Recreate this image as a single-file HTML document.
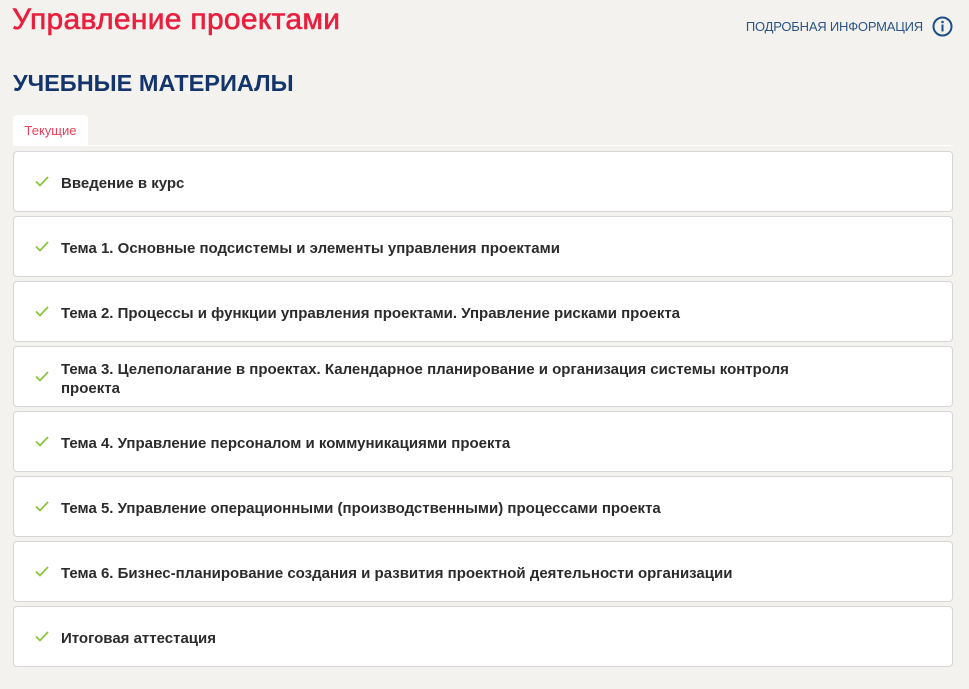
<!DOCTYPE html>
<html><head><meta charset="utf-8"><style>
body{margin:0;background:#f3f2ef;font-family:"Liberation Sans",sans-serif;width:969px;height:689px;overflow:hidden;position:relative}
h1{position:absolute;left:12px;top:3px;margin:0;font-size:30px;font-weight:normal;color:#e8203f;letter-spacing:0.3px;-webkit-text-stroke:0.6px #e8203f}
.info{position:absolute;right:16px;top:16px;font-size:13px;color:#2a5585;display:flex;align-items:center}
.info span{margin-right:9px;letter-spacing:-0.2px}
h2{position:absolute;left:13px;top:70px;margin:0;font-size:23.5px;font-weight:bold;color:#14356b;letter-spacing:0}
.tab{position:absolute;left:13px;top:115px;width:75px;height:31px;background:#fff;border-radius:4px 4px 0 0;color:#e8405a;font-size:13px;line-height:31px;text-align:center}
.line{position:absolute;left:13px;top:145px;width:940px;height:1px;background:#fff}
.card{position:absolute;left:13px;width:938px;height:59px;background:#fff;border:1px solid #d6d6d6;border-radius:4px}
.card svg{position:absolute;left:21px;top:24px}
.card div{position:absolute;left:47px;top:4px;bottom:0;width:760px;display:flex;align-items:center;font-size:15px;font-weight:bold;color:#2b2b2b;line-height:19px;letter-spacing:0}
</style></head><body>
<h1>Управление проектами</h1>
<div class="info"><span>ПОДРОБНАЯ ИНФОРМАЦИЯ</span><svg width="21" height="21" viewBox="0 0 21 21"><circle cx="10.5" cy="10.5" r="9" fill="none" stroke="#1b4f87" stroke-width="2"/><rect x="9.5" y="8.5" width="2" height="7" fill="#1b4f87"/><circle cx="10.5" cy="6" r="1.3" fill="#1b4f87"/></svg></div>
<h2>УЧЕБНЫЕ МАТЕРИАЛЫ</h2>
<div class="tab">Текущие</div>
<div class="line"></div>
<div class="card" style="top:151px"><svg width="14" height="11" viewBox="0 0 14 11"><path d="M1 5.5L5 9.5L13 1" fill="none" stroke="#8cc63f" stroke-width="1.8"/></svg><div>Введение в курс</div></div>
<div class="card" style="top:216px"><svg width="14" height="11" viewBox="0 0 14 11"><path d="M1 5.5L5 9.5L13 1" fill="none" stroke="#8cc63f" stroke-width="1.8"/></svg><div>Тема 1. Основные подсистемы и элементы управления проектами</div></div>
<div class="card" style="top:281px"><svg width="14" height="11" viewBox="0 0 14 11"><path d="M1 5.5L5 9.5L13 1" fill="none" stroke="#8cc63f" stroke-width="1.8"/></svg><div>Тема 2. Процессы и функции управления проектами. Управление рисками проекта</div></div>
<div class="card" style="top:346px"><svg width="14" height="11" viewBox="0 0 14 11"><path d="M1 5.5L5 9.5L13 1" fill="none" stroke="#8cc63f" stroke-width="1.8"/></svg><div>Тема 3. Целеполагание в проектах. Календарное планирование и организация системы контроля<br>проекта</div></div>
<div class="card" style="top:411px"><svg width="14" height="11" viewBox="0 0 14 11"><path d="M1 5.5L5 9.5L13 1" fill="none" stroke="#8cc63f" stroke-width="1.8"/></svg><div>Тема 4. Управление персоналом и коммуникациями проекта</div></div>
<div class="card" style="top:476px"><svg width="14" height="11" viewBox="0 0 14 11"><path d="M1 5.5L5 9.5L13 1" fill="none" stroke="#8cc63f" stroke-width="1.8"/></svg><div>Тема 5. Управление операционными (производственными) процессами проекта</div></div>
<div class="card" style="top:541px"><svg width="14" height="11" viewBox="0 0 14 11"><path d="M1 5.5L5 9.5L13 1" fill="none" stroke="#8cc63f" stroke-width="1.8"/></svg><div>Тема 6. Бизнес-планирование создания и развития проектной деятельности организации</div></div>
<div class="card" style="top:606px"><svg width="14" height="11" viewBox="0 0 14 11"><path d="M1 5.5L5 9.5L13 1" fill="none" stroke="#8cc63f" stroke-width="1.8"/></svg><div>Итоговая аттестация</div></div>
</body></html>
